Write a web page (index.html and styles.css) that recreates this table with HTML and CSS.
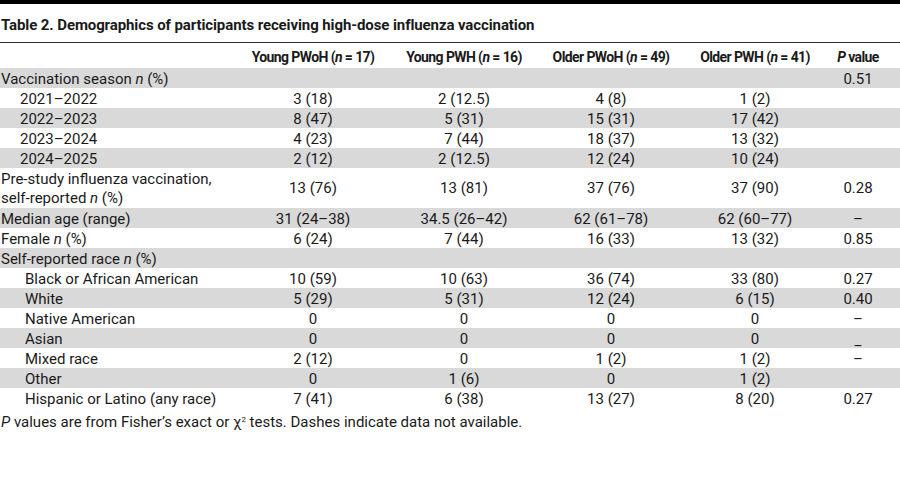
FILE: index.html
```html
<!DOCTYPE html>
<html>
<head>
  <title>Table 2</title>
  <link rel="stylesheet" href="styles.css">
</head>
<body>
  <div class="topbar"></div>
  <h1 class="caption">Table 2. Demographics of participants receiving high-dose influenza vaccination</h1>

  <table class="data">
    <colgroup>
      <col class="c-label">
      <col class="c-yn">
      <col class="c-yp">
      <col class="c-on">
      <col class="c-op">
      <col class="c-p">
    </colgroup>
    <thead>
      <tr>
        <th></th>
        <th>Young PWoH (<i>n</i> = 17)</th>
        <th>Young PWH (<i>n</i> = 16)</th>
        <th>Older PWoH (<i>n</i> = 49)</th>
        <th>Older PWH (<i>n</i> = 41)</th>
        <th class="pval"><i>P</i> value</th>
      </tr>
    </thead>
    <tbody>
      <tr class="shade">
        <td>Vaccination season <i>n</i> (%)</td>
        <td></td><td></td><td></td><td></td>
        <td class="pval">0.51</td>
      </tr>
      <tr>
        <td class="sub">2021–2022</td>
        <td>3 (18)</td><td>2 (12.5)</td><td>4 (8)</td><td>1 (2)</td>
        <td class="pval"></td>
      </tr>
      <tr class="shade">
        <td class="sub">2022–2023</td>
        <td>8 (47)</td><td>5 (31)</td><td>15 (31)</td><td>17 (42)</td>
        <td class="pval"></td>
      </tr>
      <tr>
        <td class="sub">2023–2024</td>
        <td>4 (23)</td><td>7 (44)</td><td>18 (37)</td><td>13 (32)</td>
        <td class="pval"></td>
      </tr>
      <tr class="shade">
        <td class="sub">2024–2025</td>
        <td>2 (12)</td><td>2 (12.5)</td><td>12 (24)</td><td>10 (24)</td>
        <td class="pval"></td>
      </tr>
      <tr class="tall">
        <td>Pre-study influenza vaccination,<br>self-reported <i>n</i> (%)</td>
        <td>13 (76)</td><td>13 (81)</td><td>37 (76)</td><td>37 (90)</td>
        <td class="pval">0.28</td>
      </tr>
      <tr class="shade">
        <td>Median age (range)</td>
        <td>31 (24–38)</td><td>34.5 (26–42)</td><td>62 (61–78)</td><td>62 (60–77)</td>
        <td class="pval">–</td>
      </tr>
      <tr>
        <td>Female <i>n</i> (%)</td>
        <td>6 (24)</td><td>7 (44)</td><td>16 (33)</td><td>13 (32)</td>
        <td class="pval">0.85</td>
      </tr>
      <tr class="shade">
        <td>Self-reported race <i>n</i> (%)</td>
        <td></td><td></td><td></td><td></td>
        <td class="pval"></td>
      </tr>
      <tr>
        <td class="sub race">Black or African American</td>
        <td>10 (59)</td><td>10 (63)</td><td>36 (74)</td><td>33 (80)</td>
        <td class="pval">0.27</td>
      </tr>
      <tr class="shade">
        <td class="sub race">White</td>
        <td>5 (29)</td><td>5 (31)</td><td>12 (24)</td><td>6 (15)</td>
        <td class="pval">0.40</td>
      </tr>
      <tr>
        <td class="sub race">Native American</td>
        <td>0</td><td>0</td><td>0</td><td>0</td>
        <td class="pval">–</td>
      </tr>
      <tr class="shade">
        <td class="sub race">Asian</td>
        <td>0</td><td>0</td><td>0</td><td>0</td>
        <td class="pval low">_</td>
      </tr>
      <tr>
        <td class="sub race">Mixed race</td>
        <td>2 (12)</td><td>0</td><td>1 (2)</td><td>1 (2)</td>
        <td class="pval">–</td>
      </tr>
      <tr class="shade">
        <td class="sub race">Other</td>
        <td>0</td><td>1 (6)</td><td>0</td><td>1 (2)</td>
        <td class="pval"></td>
      </tr>
      <tr>
        <td class="sub race">Hispanic or Latino (any race)</td>
        <td>7 (41)</td><td>6 (38)</td><td>13 (27)</td><td>8 (20)</td>
        <td class="pval">0.27</td>
      </tr>
    </tbody>
  </table>

  <p class="note"><i>P</i> values are from Fisher’s exact or χ<sup>2</sup> tests. Dashes indicate data not available.</p>
</body>
</html>
```

FILE: styles.css
```css
* {
  box-sizing: border-box;
  margin: 0;
  padding: 0;
}

body {
  background: #fff;
  color: #1a1a1a;
  font-family: Roboto, 'Noto Sans', sans-serif;
  font-size: 15px;
  width: 900px;
}

.topbar {
  height: 4px;
  background: #000;
}

.caption {
  font-size: 15px;
  font-weight: 700;
  letter-spacing: -0.1px;
  line-height: 18px;
  padding: 12px 0 8px 1px;
  border-bottom: 1px solid #333;
}

.data {
  width: 900px;
  border-collapse: collapse;
  table-layout: fixed;
}

.c-label { width: 238px; }
.c-yn { width: 150px; }
.c-yp { width: 152px; }
.c-on { width: 142px; }
.c-op { width: 146px; }
.c-p { width: 72px; }

.data th {
  height: 25px;
  font-size: 14px;
  font-weight: 700;
  letter-spacing: -0.6px;
  text-align: center;
  line-height: 18px;
  padding-top: 2px;
}

.data td {
  height: 20px;
  line-height: 18px;
  padding: 1px 0 0;
  text-align: center;
  vertical-align: middle;
}

.data .tall td {
  height: 40px;
  line-height: 19px;
}

.data td:first-child {
  text-align: left;
  padding-left: 1px;
}

.data td.sub {
  padding-left: 20px;
}

.data td.race {
  padding-left: 25px;
}

.data .pval {
  padding-right: 12px;
}

.data .low {
  line-height: 14px;
  padding-top: 4px;
}

.shade td {
  background: #d9d9d9;
}

.note {
  line-height: 18px;
  padding: 5px 0 0 1px;
}

.note sup {
  font-size: 8px;
  vertical-align: 5px;
  line-height: 0;
}
```
